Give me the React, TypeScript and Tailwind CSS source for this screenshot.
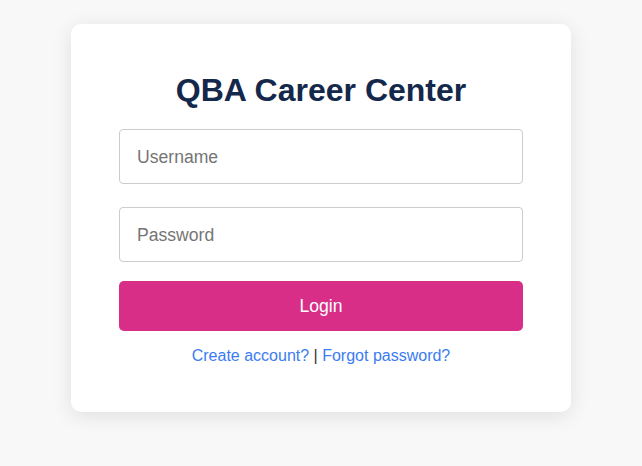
export default function App() {
  return (
    <div className="min-h-[466px] w-full bg-[#f8f8f8] flex items-start justify-center pt-6 font-['Liberation_Sans',Arial,sans-serif]">
      <div className="w-[500px] bg-white rounded-[10px] shadow-[0_4px_20px_rgba(0,0,0,0.1)] px-12 pt-[47px] pb-[47px] flex flex-col">
        <h1 className="text-[32px] leading-[38px] font-bold text-[#14284b] text-center">QBA Career Center</h1>
        <input
          className="mt-[20px] h-[55px] shrink-0 w-full border border-[#cccccc] rounded-[4px] px-[17px] pt-[2px] text-[17.6px] text-[#333] placeholder:text-[#757575] outline-none"
          placeholder="Username"
        />
        <input
          type="password"
          className="mt-[23px] h-[55px] shrink-0 w-full border border-[#cccccc] rounded-[4px] px-[17px] pt-[2px] text-[17.6px] text-[#333] placeholder:text-[#757575] outline-none"
          placeholder="Password"
        />
        <button className="mt-[19px] h-[50px] shrink-0 w-full rounded-[5px] bg-[#d82e87] text-white text-[17.6px] pt-[1px]">Login</button>
        <div className="mt-[16px] text-center text-[16px] leading-[18px] text-[#333]">
          <a href="#" className="text-[#3b7cf0]">Create account?</a> | <a href="#" className="text-[#3b7cf0]">Forgot password?</a>
        </div>
      </div>
    </div>
  );
}
